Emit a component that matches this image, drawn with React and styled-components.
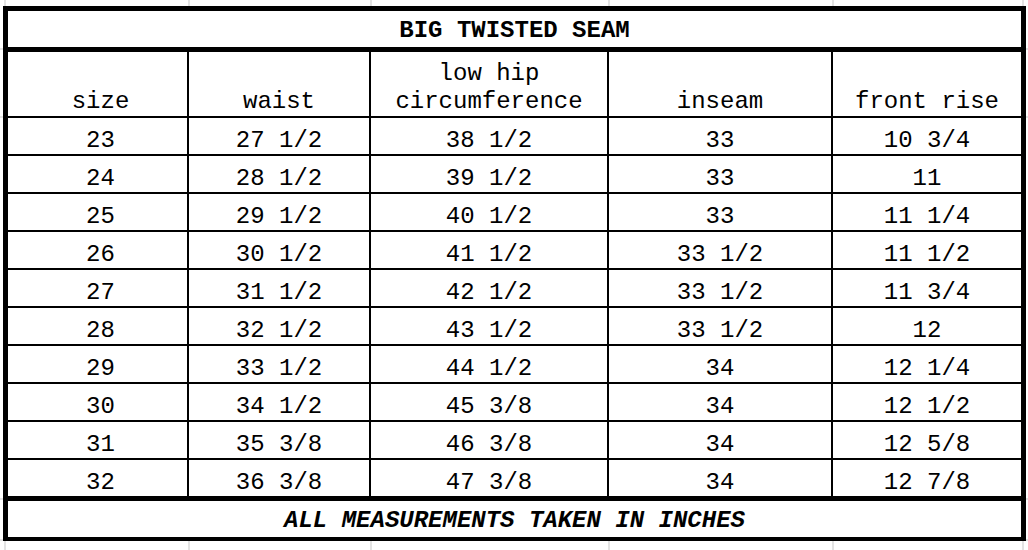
import React from "react";
import styled, { createGlobalStyle } from "styled-components";

const GlobalStyle = createGlobalStyle`
  html, body { margin: 0; padding: 0; background: #ffffff; }
  body { font-family: "Liberation Mono", "Courier New", monospace; color: #000; }
`;

const GRID = "#e3e3e3";
const vline = (x) => `linear-gradient(${GRID}, ${GRID}) ${x}px 0 / 2px 100% no-repeat`;
const hline = (y) => `linear-gradient(${GRID}, ${GRID}) 0 ${y}px / 100% 2px no-repeat`;

const Page = styled.div`
  width: 1028px;
  height: 550px;
  overflow: hidden;
  box-sizing: border-box;
  padding: 6px 0 0 3px;
  background: ${[4, 188, 370, 608, 832, 1022].map(vline).join(", ")},
    ${[48, 116, 498, 539].map(hline).join(", ")}, #ffffff;
`;

const Sheet = styled.div`
  width: 1023px;
  box-sizing: border-box;
  border: 5px solid #000;
  border-bottom-width: 4px;
  background: #fff;
  font-family: "Liberation Mono", "Courier New", monospace;
  font-size: 24px;
`;

const Banner = styled.div`
  height: 36px;
  box-sizing: border-box;
  padding-top: 3px;
  display: flex;
  align-items: center;
  justify-content: center;
  line-height: 28px;
  font-weight: bold;
  font-style: ${(p) => (p.$italic ? "italic" : "normal")};
  border-top: ${(p) => (p.$top ? "5px solid #000" : "none")};
  border-bottom: ${(p) => (p.$bottom ? "5px solid #000" : "none")};
  white-space: pre;
  ${(p) => (p.$top ? "height: 41px;" : "")}
  ${(p) => (p.$bottom ? "height: 41px;" : "")}
`;

const Grid = styled.div`
  display: grid;
  grid-template-columns: 179px 180px 236px 222px 188px;
  grid-template-rows: 64px;
  grid-auto-rows: 36px;
  gap: 2px;
  background: #000;
`;

const Cell = styled.div`
  background: #fff;
  display: flex;
  flex-direction: column;
  justify-content: flex-end;
  align-items: center;
  text-align: center;
  line-height: ${(p) => (p.$head ? "28px" : "26px")};
  padding-left: ${(p) => (p.$first ? "6px" : "0")};
  white-space: ${(p) => (p.$head ? "normal" : "pre")};
`;

const headers = ["size", "waist", "low hip circumference", "inseam", "front rise"];

const rows = [
  ["23", "27 1/2", "38 1/2", "33", "10 3/4"],
  ["24", "28 1/2", "39 1/2", "33", "11"],
  ["25", "29 1/2", "40 1/2", "33", "11 1/4"],
  ["26", "30 1/2", "41 1/2", "33 1/2", "11 1/2"],
  ["27", "31 1/2", "42 1/2", "33 1/2", "11 3/4"],
  ["28", "32 1/2", "43 1/2", "33 1/2", "12"],
  ["29", "33 1/2", "44 1/2", "34", "12 1/4"],
  ["30", "34 1/2", "45 3/8", "34", "12 1/2"],
  ["31", "35 3/8", "46 3/8", "34", "12 5/8"],
  ["32", "36 3/8", "47 3/8", "34", "12 7/8"],
];

export default function App() {
  return (
    <Page>
      <GlobalStyle />
      <Sheet>
        <Banner $bottom>BIG TWISTED SEAM</Banner>
        <Grid>
          {headers.map((h, i) => (
            <Cell key={h} $head $first={i === 0}>
              {h}
            </Cell>
          ))}
          {rows.map((r, ri) =>
            r.map((v, ci) => (
              <Cell key={`${ri}-${ci}`} $first={ci === 0}>
                {v}
              </Cell>
            ))
          )}
        </Grid>
        <Banner $top $italic>
          ALL MEASUREMENTS TAKEN IN INCHES
        </Banner>
      </Sheet>
    </Page>
  );
}
